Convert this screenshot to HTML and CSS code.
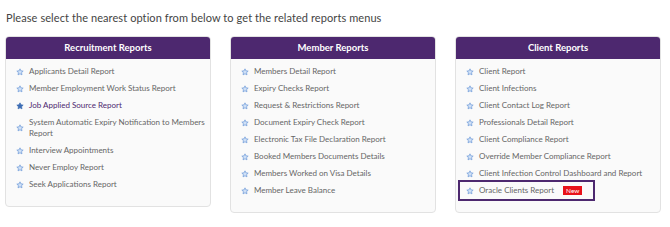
FILE: index.html
```html
<!DOCTYPE html>
<html>
<head>
<meta charset="utf-8">
<link rel="stylesheet" href="styles.css">
</head>
<body>
<svg width="0" height="0" style="position:absolute">
  <defs>
    <symbol id="star" viewBox="0 0 24 24">
      <path d="M12 2.5l2.9 6.1 6.6.8-4.9 4.6 1.3 6.6L12 17.3l-5.9 3.3 1.3-6.6-4.9-4.6 6.6-.8z" stroke-linejoin="round"/>
    </symbol>
  </defs>
</svg>
<p class="intro">Please select the nearest option from below to get the related reports menus</p>
<div class="cards">
  <section class="card">
    <h2 class="card-head">Recruitment Reports</h2>
    <ul class="list">
      <li class="item"><svg class="star"><use href="#star"/></svg><span>Applicants Detail Report</span></li>
      <li class="item"><svg class="star"><use href="#star"/></svg><span>Member Employment Work Status Report</span></li>
      <li class="item active"><svg class="star"><use href="#star"/></svg><span>Job Applied Source Report</span></li>
      <li class="item"><svg class="star"><use href="#star"/></svg><span>System Automatic Expiry Notification to Members Report</span></li>
      <li class="item"><svg class="star"><use href="#star"/></svg><span>Interview Appointments</span></li>
      <li class="item"><svg class="star"><use href="#star"/></svg><span>Never Employ Report</span></li>
      <li class="item"><svg class="star"><use href="#star"/></svg><span>Seek Applications Report</span></li>
    </ul>
  </section>
  <section class="card">
    <h2 class="card-head">Member Reports</h2>
    <ul class="list">
      <li class="item"><svg class="star"><use href="#star"/></svg><span>Members Detail Report</span></li>
      <li class="item"><svg class="star"><use href="#star"/></svg><span>Expiry Checks Report</span></li>
      <li class="item"><svg class="star"><use href="#star"/></svg><span>Request &amp; Restrictions Report</span></li>
      <li class="item"><svg class="star"><use href="#star"/></svg><span>Document Expiry Check Report</span></li>
      <li class="item"><svg class="star"><use href="#star"/></svg><span>Electronic Tax File Declaration Report</span></li>
      <li class="item"><svg class="star"><use href="#star"/></svg><span>Booked Members Documents Details</span></li>
      <li class="item"><svg class="star"><use href="#star"/></svg><span>Members Worked on Visa Details</span></li>
      <li class="item"><svg class="star"><use href="#star"/></svg><span>Member Leave Balance</span></li>
    </ul>
  </section>
  <section class="card">
    <h2 class="card-head">Client Reports</h2>
    <ul class="list">
      <li class="item"><svg class="star"><use href="#star"/></svg><span>Client Report</span></li>
      <li class="item"><svg class="star"><use href="#star"/></svg><span>Client Infections</span></li>
      <li class="item"><svg class="star"><use href="#star"/></svg><span>Client Contact Log Report</span></li>
      <li class="item"><svg class="star"><use href="#star"/></svg><span>Professionals Detail Report</span></li>
      <li class="item"><svg class="star"><use href="#star"/></svg><span>Client Compliance Report</span></li>
      <li class="item"><svg class="star"><use href="#star"/></svg><span>Override Member Compliance Report</span></li>
      <li class="item"><svg class="star"><use href="#star"/></svg><span>Client Infection Control Dashboard and Report</span></li>
      <li class="item highlight"><svg class="star"><use href="#star"/></svg><span>Oracle Clients Report</span><span class="badge">New</span></li>
    </ul>
  </section>
</div>
</body>
</html>
```

FILE: styles.css
```css
* { box-sizing: border-box; }
body {
  margin: 0;
  background: #ffffff;
  font-family: Lato, "Open Sans", sans-serif;
  color: #555555;
}
.intro {
  margin: 0;
  padding: 11px 0 0 6px;
  font-size: 11px;
  line-height: 13px;
  color: #444444;
  letter-spacing: 0.08px;
}
.cards {
  display: grid;
  grid-template-columns: 206px 206px 206px;
  column-gap: 19px;
  padding: 12px 0 0 5px;
  align-items: start;
}
.card {
  background: #fafafa;
  border: 1px solid #e2e2e2;
  border-radius: 4px;
  overflow: hidden;
}
.card-head {
  height: 23px;
  background: #4d286f;
  color: #ffffff;
  font-size: 9.5px;
  font-weight: 700;
  line-height: 23px;
  text-align: center;
  margin: -1px -1px 0 -1px;
}
.list {
  list-style: none;
  margin: 0;
  padding: 7px 1px 16px 10px;
  display: flex;
  flex-direction: column;
  gap: 6px;
}
.item {
  display: flex;
  align-items: center;
  gap: 5px;
  font-size: 8px;
  line-height: 11px;
  color: #666666;
}
.star {
  flex: none;
  width: 8px;
  height: 8px;
  fill: #cfe0f6;
  stroke: #6f9bd8;
  stroke-width: 2.2;
}
.item.active { color: #4d286f; }
.item.active .star { fill: #3c6cb4; stroke: #3c6cb4; }
.item.highlight {
  align-self: flex-start;
  border: 2px solid #4d286f;
  margin: -5px 0 -5px -8px;
  padding: 3px 11px 3px 6px;
}
.badge {
  background: #e8121a;
  color: #ffffff;
  font-size: 6.5px;
  line-height: 9px;
  padding: 0 3px;
  margin-left: 4px;
}
```
